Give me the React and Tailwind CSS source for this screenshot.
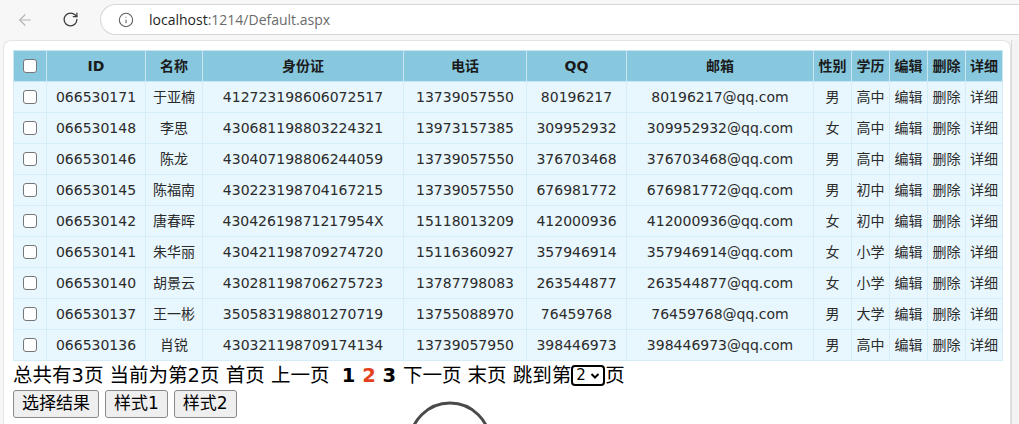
import { ArrowLeft, RotateCw, Info } from 'lucide-react';

const rows = [
  ['066530171', '于亚楠', '412723198606072517', '13739057550', '80196217', '80196217@qq.com', '男', '高中'],
  ['066530148', '李思', '430681198803224321', '13973157385', '309952932', '309952932@qq.com', '女', '高中'],
  ['066530146', '陈龙', '430407198806244059', '13739057550', '376703468', '376703468@qq.com', '男', '高中'],
  ['066530145', '陈福南', '430223198704167215', '13739057550', '676981772', '676981772@qq.com', '男', '初中'],
  ['066530142', '唐春晖', '43042619871217954X', '15118013209', '412000936', '412000936@qq.com', '女', '初中'],
  ['066530141', '朱华丽', '430421198709274720', '15116360927', '357946914', '357946914@qq.com', '女', '小学'],
  ['066530140', '胡景云', '430281198706275723', '13787798083', '263544877', '263544877@qq.com', '女', '小学'],
  ['066530137', '王一彬', '350583198801270719', '13755088970', '76459768', '76459768@qq.com', '男', '大学'],
  ['066530136', '肖锐', '430321198709174134', '13739057950', '398446973', '398446973@qq.com', '男', '高中'],
];

const headers = [
  ['ID', 'w-[99px]'],
  ['名称', 'w-[57px]'],
  ['身份证', 'w-[201px]'],
  ['电话', 'w-[123px]'],
  ['QQ', 'w-[100px]'],
  ['邮箱', 'w-[187px]'],
  ['性别', 'w-[38px]'],
  ['学历', 'w-[38px]'],
  ['编辑', 'w-[38px]'],
  ['删除', 'w-[38px]'],
  ['详细', 'w-[37px]'],
];

function Checkbox() {
  return (
    <div className="mx-auto w-[14px] h-[14px] rounded-[3px] border border-[#767676] bg-white" />
  );
}

function BrowserBar() {
  return (
    <div className="h-[40px] bg-[#f7f7f7] flex items-start pt-[4px]">
      <div className="w-[50px] h-[31px] flex items-center justify-center">
        <ArrowLeft className="w-[18px] h-[18px] text-[#b4b4b4]" strokeWidth={1.5} />
      </div>
      <div className="w-[40px] h-[31px] flex items-center justify-center">
        <RotateCw className="w-[17px] h-[17px] text-[#3c3c3c]" strokeWidth={1.8} />
      </div>
      <div className="ml-[10px] flex-1 h-[31px] rounded-l-full border border-r-0 border-[#d6d6d6] bg-white flex items-center pl-[17px]">
        <Info className="w-[16px] h-[16px] text-[#5f5f5f]" strokeWidth={1.6} />
        <span className="ml-[15px] text-[14px] font-['Open_Sans',sans-serif] text-[#1f1f1f]">
          localhost<span className="text-[#6b6b6b]">:1214/Default.aspx</span>
        </span>
      </div>
    </div>
  );
}

export default function App() {
  return (
    <div className="w-[1019px] h-[424px] overflow-hidden bg-[#f7f7f7] font-['DejaVu_Sans','Noto_Sans_CJK_SC',sans-serif]">
      <BrowserBar />
      <div className="flex h-[384px]">
        <div className="w-[3px]" />
        <div className="w-[1008px] bg-white rounded-t-[8px] border border-b-0 border-[#e4e4e4] pl-[9px] pt-[9px]">
          <table className="table-fixed w-[989px] border-collapse text-[14px]">
            <thead>
              <tr className="h-[31px] bg-[#87c8de]">
                <th className="w-[33px] border border-[#c9e7f1] p-0">
                  <Checkbox />
                </th>
                {headers.map(([h, w]) => (
                  <th key={h} className={`${w} border border-[#c9e7f1] p-0 font-bold text-[#1b1b1b]`}>
                    {h}
                  </th>
                ))}
              </tr>
            </thead>
            <tbody>
              {rows.map((r) => (
                <tr key={r[0]} className="h-[31px] bg-[#e8f6fd] text-[#2b2b2b]">
                  <td className="border border-[#d5edf8] p-0">
                    <Checkbox />
                  </td>
                  {r.map((c, i) => (
                    <td key={i} className="border border-[#d5edf8] p-0 text-center whitespace-nowrap">
                      {c}
                    </td>
                  ))}
                  <td className="border border-[#d5edf8] p-0 text-center">编辑</td>
                  <td className="border border-[#d5edf8] p-0 text-center">删除</td>
                  <td className="border border-[#d5edf8] p-0 text-center">详细</td>
                </tr>
              ))}
            </tbody>
          </table>
          <div className="ml-[-9px] pl-[9px] h-[29px] flex items-center text-[19.5px] text-black whitespace-pre">
            <span>总共有3页 当前为第2页 首页 上一页  </span>
            <span className="font-bold">1 </span>
            <span className="font-bold text-[#e3421f]">2 </span>
            <span className="font-bold">3 </span>
            <span>下一页 末页 跳到第</span>
            <span className="inline-flex items-center justify-between w-[34px] h-[21px] border-2 border-black rounded-[4px] px-[3px] text-[15px] leading-none">
              2
              <svg width="10" height="8" viewBox="0 0 10 8">
                <path d="M1.5 2 L5 5.5 L8.5 2" fill="none" stroke="black" strokeWidth="2" />
              </svg>
            </span>
            <span>页</span>
          </div>
          <div className="flex items-start gap-[6px]">
            <button className="h-[28px] px-[8px] text-[17px] bg-[#efefef] border border-[#8a8a8a] rounded-[3px] text-black">
              选择结果
            </button>
            <button className="h-[28px] px-[8px] text-[17px] bg-[#efefef] border border-[#8a8a8a] rounded-[3px] text-black">
              样式1
            </button>
            <button className="h-[28px] px-[8px] text-[17px] bg-[#efefef] border border-[#8a8a8a] rounded-[3px] text-black">
              样式2
            </button>
            <svg className="ml-[165px] mt-[11px] shrink-0" width="84" height="84" viewBox="0 0 84 84">
              <circle cx="42" cy="42" r="40" fill="none" stroke="#4a4a4a" strokeWidth="3" />
            </svg>
          </div>
        </div>
        <div className="flex-1 border-l border-[#d8d8d8] bg-[#f3f3f3]" />
      </div>
    </div>
  );
}
